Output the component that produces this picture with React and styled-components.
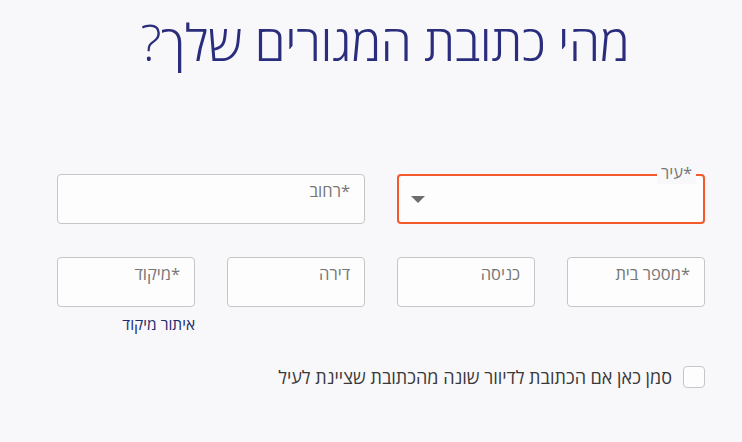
import styled, { createGlobalStyle } from "styled-components"

const Global = createGlobalStyle`
  body {
    margin: 0;
    background: #f8f8fa;
    font-family: "Open Sans", "DejaVu Sans", sans-serif;
  }
`

const Page = styled.div`
  direction: rtl;
  width: 742px;
  height: 442px;
  box-sizing: border-box;
  padding: 7px 37px 0 57px;
`

const Title = styled.h1`
  margin: 0;
  padding-left: 8px;
  text-align: center;
  font-weight: 300;
  font-size: 50px;
  line-height: 70px;
  color: #2a2c7c;
  letter-spacing: -0.3px;
`

const Form = styled.div`
  margin-top: 97px;
  display: flex;
  flex-direction: column;
  gap: 33px;
`

const Row = styled.div`
  display: grid;
  grid-template-columns: repeat(${p => p.cols}, 1fr);
  column-gap: 32px;
`

const Field = styled.div`
  position: relative;
  display: flex;
  flex-direction: column;
  align-items: flex-start;
`

const Box = styled.div`
  position: relative;
  height: 50px;
  width: 100%;
  box-sizing: border-box;
  background: #fdfdfd;
  border: ${p => (p.$active ? "2px solid #f4592b" : "1px solid #c6c6c6")};
  border-radius: 4px;
`

const Placeholder = styled.span`
  position: absolute;
  top: 4px;
  right: 14px;
  font-size: 16.5px;
  color: #767676;
`

const FloatLabel = styled.span`
  position: absolute;
  top: -14px;
  right: 7px;
  padding: 0 4px;
  background: #f8f8fa;
  font-size: 16.5px;
  line-height: 22px;
  color: #767676;
`

const Arrow = styled.span`
  position: absolute;
  left: 12px;
  top: 20px;
  width: 0;
  height: 0;
  border-left: 7px solid transparent;
  border-right: 7px solid transparent;
  border-top: 7px solid #6d6d6d;
`

const Link = styled.a`
  margin-top: 6px;
  font-size: 15.5px;
  color: #1f2a6e;
  text-decoration: none;
`

const CheckRow = styled.label`
  margin-top: 30px;
  display: flex;
  align-items: center;
  gap: 11px;
  font-size: 18px;
  color: #3a3a3a;
`

const CheckBox = styled.span`
  width: 22px;
  height: 22px;
  flex: none;
  box-sizing: border-box;
  border: 1px solid #c6c6c6;
  border-radius: 4px;
  background: #fdfdfd;
`

const Input = ({ label, link }) => (
  <Field>
    <Box>
      <Placeholder>{label}</Placeholder>
    </Box>
    {link && <Link href="#">{link}</Link>}
  </Field>
)

const App = () => {
  return (
    <Page>
      <Global />
      <Title>מהי כתובת המגורים שלך?</Title>
      <Form>
        <Row cols={2}>
          <Field>
            <Box $active>
              <FloatLabel>*עיר</FloatLabel>
              <Arrow />
            </Box>
          </Field>
          <Input label="*רחוב" />
        </Row>
        <Row cols={4}>
          <Input label="*מספר בית" />
          <Input label="כניסה" />
          <Input label="דירה" />
          <Input label="*מיקוד" link="איתור מיקוד" />
        </Row>
      </Form>
      <CheckRow>
        <CheckBox />
        סמן כאן אם הכתובת לדיוור שונה מהכתובת שציינת לעיל
      </CheckRow>
    </Page>
  )
}

export default App
